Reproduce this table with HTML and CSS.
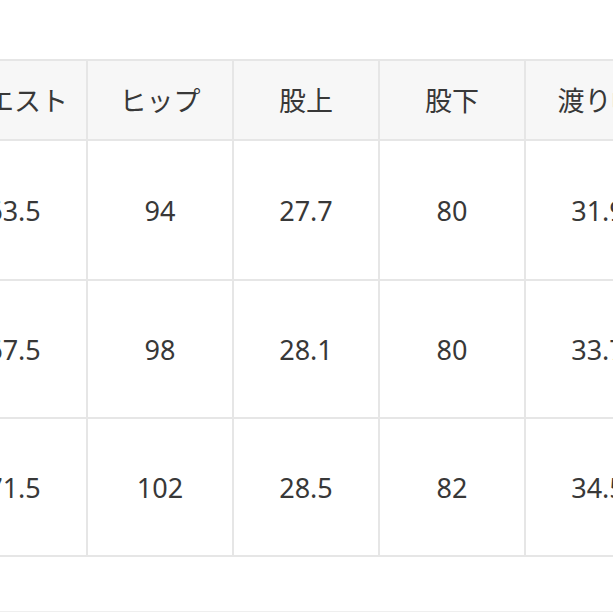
FILE: index.html
```html
<!DOCTYPE html>
<html lang="ja">
<head>
<meta charset="utf-8">
<link rel="stylesheet" href="styles.css">
</head>
<body>
<div class="page">
  <div class="table">
    <div class="cell head">ウエスト</div>
    <div class="cell head">ヒップ</div>
    <div class="cell head">股上</div>
    <div class="cell head">股下</div>
    <div class="cell head">渡り幅</div>
    <div class="cell head">裾幅</div>

    <div class="cell">63.5</div>
    <div class="cell">94</div>
    <div class="cell">27.7</div>
    <div class="cell">80</div>
    <div class="cell">31.9</div>
    <div class="cell">21</div>

    <div class="cell">67.5</div>
    <div class="cell">98</div>
    <div class="cell">28.1</div>
    <div class="cell">80</div>
    <div class="cell">33.7</div>
    <div class="cell">22</div>

    <div class="cell">71.5</div>
    <div class="cell">102</div>
    <div class="cell">28.5</div>
    <div class="cell">82</div>
    <div class="cell">34.5</div>
    <div class="cell">23</div>
  </div>
  <div class="rule"></div>
</div>
</body>
</html>
```

FILE: styles.css
```css
html, body {
  margin: 0;
  padding: 0;
  background: #ffffff;
  overflow: hidden;
}

.page {
  width: 613px;
  height: 613px;
  overflow: hidden;
  padding-top: 59px;
  box-sizing: border-box;
  font-family: "Noto Sans", "Noto Sans CJK JP", sans-serif;
  color: #383838;
}

.table {
  display: grid;
  grid-template-columns: repeat(6, 144px);
  grid-template-rows: 78px 138px 136px 136px;
  gap: 2px;
  padding: 2px 0;
  background: #e6e6e6;
  margin-left: -58px;
  width: max-content;
}

.cell {
  background: #ffffff;
  display: flex;
  align-items: center;
  justify-content: center;
  font-size: 27px;
  line-height: 1;
}

.head {
  background: #f7f7f7;
}

.rule {
  margin-top: 54px;
  height: 1px;
  background: #efefef;
}
```
